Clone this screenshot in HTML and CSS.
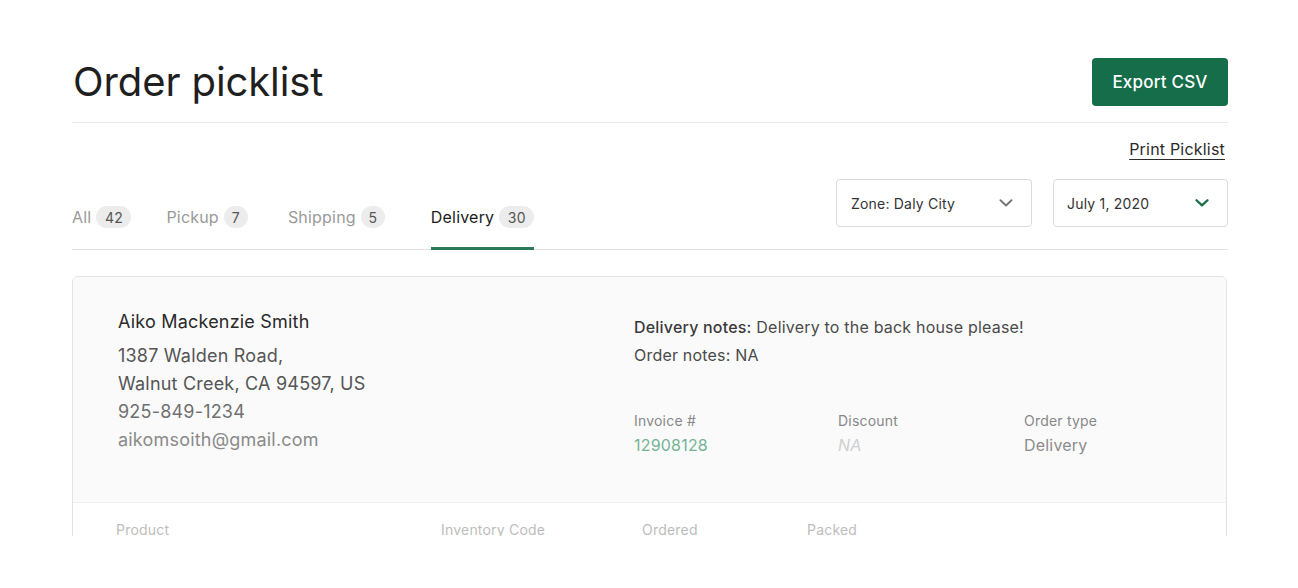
FILE: index.html
```html
<!DOCTYPE html>
<html lang="en">
<head>
<meta charset="utf-8">
<title>Order picklist</title>
<link rel="stylesheet" href="styles.css">
</head>
<body>
<div class="page">
  <header class="page-header">
    <h1 class="title">Order picklist</h1>
    <button class="btn-primary">Export CSV</button>
  </header>
  <div class="print-row"><a class="print-link" href="#">Print Picklist</a></div>
  <div class="toolbar">
    <nav class="tabs">
      <div class="tab tab-all"><span>All</span><span class="badge">42</span></div>
      <div class="tab tab-pickup"><span>Pickup</span><span class="badge badge-sm">7</span></div>
      <div class="tab tab-shipping"><span>Shipping</span><span class="badge badge-sm">5</span></div>
      <div class="tab active"><span>Delivery</span><span class="badge">30</span></div>
    </nav>
    <div class="filters">
      <div class="select select-zone">
        <span>Zone: Daly City</span>
        <svg class="chev" width="14" height="8" viewBox="0 0 14 8"><path d="M1.5 1.2 L7 6.4 L12.5 1.2" fill="none" stroke="#777" stroke-width="2" stroke-linecap="round" stroke-linejoin="round"/></svg>
      </div>
      <div class="select select-date">
        <span>July 1, 2020</span>
        <svg class="chev" width="14" height="8" viewBox="0 0 14 8"><path d="M1.5 1.2 L7 6.4 L12.5 1.2" fill="none" stroke="#17704a" stroke-width="2.2" stroke-linecap="round" stroke-linejoin="round"/></svg>
      </div>
    </div>
  </div>
  <div class="card-clip">
    <section class="card">
      <div class="card-head">
        <div class="customer">
          <div class="cust-name">Aiko Mackenzie Smith</div>
          <div class="cust-addr">1387 Walden Road,</div>
          <div class="cust-addr">Walnut Creek, CA 94597, US</div>
          <div class="cust-phone">925-849-1234</div>
          <div class="cust-email">aikomsoith@gmail.com</div>
        </div>
        <div class="details">
          <div class="note"><strong>Delivery notes:</strong> Delivery to the back house please!</div>
          <div class="note">Order notes: NA</div>
          <div class="meta">
            <div class="meta-item">
              <div class="meta-label">Invoice #</div>
              <div class="meta-value invoice">12908128</div>
            </div>
            <div class="meta-item">
              <div class="meta-label">Discount</div>
              <div class="meta-value empty">NA</div>
            </div>
            <div class="meta-item">
              <div class="meta-label">Order type</div>
              <div class="meta-value">Delivery</div>
            </div>
          </div>
        </div>
      </div>
      <div class="table-head">
        <span>Product</span>
        <span>Inventory Code</span>
        <span>Ordered</span>
        <span>Packed</span>
      </div>
    </section>
  </div>
</div>
</body>
</html>
```

FILE: styles.css
```css
* { box-sizing: border-box; }
html, body { margin: 0; background: #fff; }
body {
  font-family: Inter, "Noto Sans", "Liberation Sans", sans-serif;
  color: #222;
  letter-spacing: 0.2px;
}
.page {
  width: 1156px;
  margin-left: 72px;
}
.page-header {
  display: flex;
  justify-content: space-between;
  align-items: center;
  padding-top: 58px;
  padding-bottom: 16px;
  border-bottom: 1px solid #e6e6e6;
}
.title {
  margin: 0;
  font-size: 40px;
  font-weight: 400;
  line-height: 48px;
  color: #1f1f1f;
  letter-spacing: -0.1px;
  padding-left: 1px;
}
.btn-primary {
  width: 136px;
  height: 48px;
  border: 0;
  border-radius: 4px;
  background: #156d49;
  color: #fff;
  font-family: inherit;
  font-size: 17px;
  font-weight: 450;
  letter-spacing: 0.2px;
  cursor: pointer;
}
.print-row {
  display: flex;
  justify-content: flex-end;
  padding-top: 14px;
  padding-right: 3px;
}
.print-link {
  font-size: 16px;
  line-height: 24px;
  color: #2b2b2b;
  text-decoration: underline;
  text-underline-offset: 4px;
  text-decoration-thickness: 1px;
}
.toolbar {
  display: flex;
  justify-content: space-between;
  align-items: flex-end;
  margin-top: 18px;
  border-bottom: 1px solid #e3e3e3;
}
.tabs {
  display: flex;
}
.tab {
  display: flex;
  align-items: center;
  gap: 5px;
  font-size: 16px;
  color: #9a9a9a;
  padding-bottom: 19px;
  border-bottom: 3px solid transparent;
  margin-bottom: -1px;
}
.tab-all { margin-right: 35px; }
.tab-pickup { margin-right: 40px; }
.tab-shipping { margin-right: 46px; }
.tab.active {
  color: #1c1c1c;
  border-bottom-color: #2b7a57;
}
.badge {
  display: inline-flex;
  align-items: center;
  justify-content: center;
  min-width: 35px;
  height: 22px;
  padding: 0 8px;
  border-radius: 11px;
  background: #ececec;
  color: #555;
  font-size: 14px;
}
.badge-sm { min-width: 24px; padding: 0 6px; }
.filters {
  display: flex;
  gap: 21px;
  margin-bottom: 22px;
}
.select {
  display: flex;
  align-items: center;
  justify-content: space-between;
  height: 48px;
  padding: 0 18px 0 14px;
  border: 1px solid #d9d9d9;
  border-radius: 4px;
  font-size: 14px;
  color: #333;
  background: #fff;
}
.select-zone { width: 196px; }
.select-date { width: 175px; padding-left: 13px; }
.chev { display: block; }
.card-clip {
  margin-top: 26px;
  height: 260px;
  overflow: hidden;
}
.card {
  border: 1px solid #e3e3e3;
  border-radius: 6px;
  width: 1155px;
  background: #fff;
}
.card-head {
  display: grid;
  grid-template-columns: 516px 1fr;
  background: #fafafa;
  padding: 31px 40px 45px 45px;
  border-bottom: 1px solid #efefef;
  border-radius: 6px 6px 0 0;
}
.cust-name {
  font-size: 18px;
  line-height: 28px;
  color: #2a2a2a;
  margin-bottom: 6px;
}
.cust-addr {
  font-size: 18px;
  line-height: 28px;
  color: #555;
}
.cust-phone {
  font-size: 18px;
  line-height: 28px;
  color: #707070;
}
.cust-email {
  font-size: 18px;
  line-height: 28px;
  color: #8a8a8a;
}
.details { padding-top: 5px; }
.note {
  font-size: 16px;
  line-height: 28px;
  color: #4a4a4a;
}
.note strong { font-weight: 500; color: #3a3a3a; }
.meta {
  display: grid;
  grid-template-columns: 204px 186px 1fr;
  margin-top: 42px;
}
.meta-label {
  font-size: 14px;
  line-height: 20px;
  color: #888;
}
.meta-value {
  margin-top: 2px;
  font-size: 16px;
  line-height: 24px;
  color: #8c8c8c;
}
.meta-value.invoice { color: #76b394; }
.meta-value.empty { color: #cfcfcf; font-style: italic; }
.table-head {
  display: grid;
  grid-template-columns: 325px 201px 165px 1fr;
  padding: 17px 0 0 43px;
  font-size: 14px;
  line-height: 20px;
  color: #bdbdbd;
}
```
